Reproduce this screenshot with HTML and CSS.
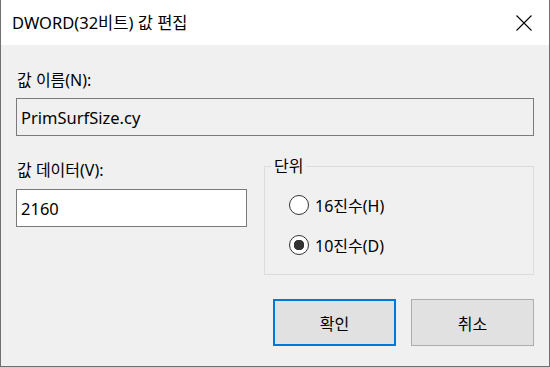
FILE: index.html
```html
<!DOCTYPE html>
<html lang="ko">
<head>
    <meta charset="UTF-8">
    <meta name="viewport" content="width=device-width, initial-scale=1.0">
    <title>DWORD(32비트) 값 편집</title>
    <link rel="stylesheet" href="styles.css">
</head>
<body>

    <div class="window">
        <div class="titlebar">
            <span class="title">DWORD(32비트) 값 편집</span>
            <button class="close" type="button" aria-label="닫기">
                <svg width="16" height="16" viewBox="0 0 16 16">
                    <path d="M0.5 0.5 L15.5 15.5 M15.5 0.5 L0.5 15.5" stroke="#000" stroke-width="1.1" fill="none"/>
                </svg>
            </button>
        </div>

        <form class="content">
            <label class="field-label" for="valname">값 이름(N):</label>
            <input class="textbox readonly" type="text" id="valname" value="PrimSurfSize.cy" readonly>

            <div class="row">
                <div class="data-col">
                    <label class="field-label" for="valdata">값 데이터(V):</label>
                    <input class="textbox" type="text" id="valdata" value="2160">
                </div>

                <fieldset class="unit">
                    <legend>단위</legend>
                    <label class="radio">
                        <input type="radio" name="base" value="16">
                        <span>16진수(H)</span>
                    </label>
                    <label class="radio">
                        <input type="radio" name="base" value="10" checked>
                        <span>10진수(D)</span>
                    </label>
                </fieldset>
            </div>

            <div class="buttons">
                <button type="submit" class="btn default">확인</button>
                <button type="button" class="btn">취소</button>
            </div>
        </form>
    </div>

</body>
</html>
```

FILE: styles.css
```css
* {
    box-sizing: border-box;
}
body {
    margin: 0;
    background: #cfcfcf;
    font-family: "Noto Sans", "Noto Sans CJK KR", sans-serif;
    font-size: 16px;
    color: #000;
}
.window {
    width: 550px;
    height: 367px;
    background: #f0f0f0;
    border: 1px solid #707070;
    border-top: none;
}
.titlebar {
    height: 45px;
    background: #fff;
    display: flex;
    align-items: center;
    justify-content: space-between;
    padding-left: 11px;
}
.title {
    font-size: 16.5px;
    line-height: 20px;
}
.close {
    background: none;
    border: none;
    padding: 0;
    width: 46px;
    height: 45px;
    display: flex;
    align-items: center;
    justify-content: center;
    margin-right: 2px;
}
.content {
    padding: 25px 15px 0 15px;
}
.field-label {
    display: block;
    line-height: 20px;
    padding-left: 1px;
}
.textbox {
    display: block;
    width: 100%;
    height: 38px;
    margin-top: 8px;
    border: 1px solid #7a7a7a;
    background: #fff;
    font: inherit;
    font-size: 16.5px;
    padding: 0 4px;
    outline: none;
}
.textbox.readonly {
    background: #f0f0f0;
}
.row {
    display: flex;
    margin-top: 20px;
    gap: 17px;
}
.data-col {
    width: 231px;
    padding-top: 4px;
}
.data-col .textbox {
    margin-top: 9px;
}
.unit {
    flex: 1;
    margin: 0;
    height: 119px;
    border: 1px solid #dcdcdc;
    padding: 19px 6px 0 6px;
}
.unit legend {
    padding: 0 3px;
    line-height: 20px;
}
.radio {
    display: flex;
    align-items: center;
    height: 20px;
    margin-left: 18px;
    margin-bottom: 20px;
}
.radio input {
    appearance: none;
    -webkit-appearance: none;
    margin: 0 6px 0 0;
    width: 20px;
    height: 20px;
    border: 1px solid #333;
    border-radius: 50%;
    background: #fff;
}
.radio input:checked {
    background: radial-gradient(circle, #333 0, #333 5px, #fff 5.5px);
}
.buttons {
    display: flex;
    justify-content: flex-end;
    gap: 15px;
    margin-top: 24px;
}
.btn {
    width: 123px;
    height: 47px;
    background: #e1e1e1;
    border: 1px solid #adadad;
    font: inherit;
    color: #000;
    padding: 0;
}
.btn.default {
    border: 2px solid #0078d7;
}
```
